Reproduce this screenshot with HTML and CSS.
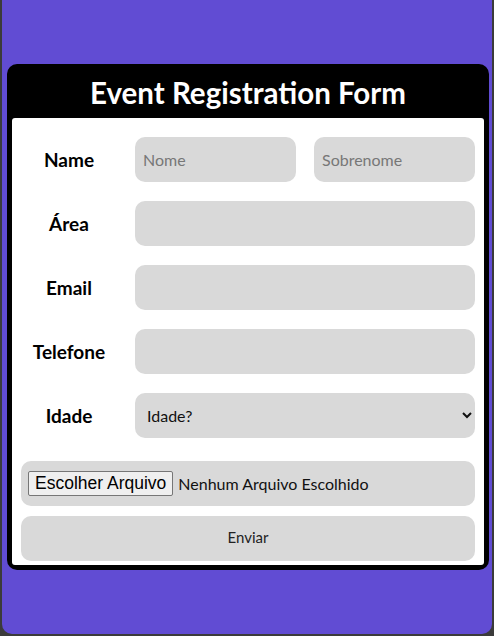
FILE: index.html
```html
<!DOCTYPE html>
<html lang="pt">
<head>
<meta charset="utf-8">
<title>Event Registration Form</title>
<link rel="stylesheet" href="styles.css">
</head>
<body>
<div class="page">
  <div class="card">
    <h1 class="title">Event Registration Form</h1>
    <form class="panel">
      <div class="row">
        <label class="label">Name</label>
        <div class="pair">
          <input class="field" type="text" placeholder="Nome">
          <input class="field" type="text" placeholder="Sobrenome">
        </div>
      </div>
      <div class="row">
        <label class="label">Área</label>
        <input class="field" type="text">
      </div>
      <div class="row">
        <label class="label">Email</label>
        <input class="field" type="text">
      </div>
      <div class="row">
        <label class="label">Telefone</label>
        <input class="field" type="text">
      </div>
      <div class="row">
        <label class="label">Idade</label>
        <select class="field select">
          <option>Idade?</option>
        </select>
      </div>
      <div class="file-row">
        <span class="file-btn">Escolher Arquivo</span>
        <span class="file-name">Nenhum Arquivo Escolhido</span>
      </div>
      <button class="submit" type="button">Enviar</button>
    </form>
  </div>
</div>
</body>
</html>
```
FILE: styles.css
```css
* { box-sizing: border-box; }
html, body { margin: 0; padding: 0; }
body {
  background: #3b3b3b;
  font-family: Lato, "Open Sans", sans-serif;
}
.page {
  margin: 0 2px;
  min-height: 634px;
  background: #614cd3;
  border-radius: 0 0 10px 10px;
  padding: 64px 3px 0 5px;
}
.card {
  background: #000;
  border-radius: 10px;
  padding: 0 5px 5px;
}
.title {
  margin: 0;
  height: 54px;
  line-height: 58px;
  text-align: center;
  color: #fff;
  font-size: 29.5px;
  font-weight: 700;
}
.panel {
  background: #fff;
  border-radius: 3px;
  padding: 19px 9px 4px;
  display: flex;
  flex-direction: column;
}
.row {
  display: flex;
  align-items: center;
  gap: 18px;
  margin-bottom: 19px;
}
.label {
  width: 96px;
  flex: none;
  text-align: center;
  font-weight: 700;
  font-size: 19px;
  color: #000;
}
.pair {
  flex: 1 1 0;
  min-width: 0;
  display: flex;
  gap: 18px;
}
.field {
  flex: 1 1 0;
  width: 0;
  min-width: 0;
  height: 45px;
  border: none;
  border-radius: 10px;
  background: #d9d9d9;
  padding: 0 8px;
  font-family: Lato, sans-serif;
  font-size: 16px;
  color: #222;
  outline: none;
}
.field::placeholder { color: #777; }
.select {
  font-size: 16px;
  padding-left: 8px;
  color: #111;
}
.file-row {
  margin-top: 4px;
  height: 45px;
  background: #d9d9d9;
  border-radius: 10px;
  display: flex;
  align-items: center;
  padding: 0 7px;
  gap: 5px;
}
.file-btn {
  font-family: "Liberation Sans", Arial, sans-serif;
  font-size: 17.5px;
  background: #efefef;
  border: 1px solid #767676;
  border-radius: 2px;
  padding: 0 6px;
  height: 25px;
  line-height: 23px;
  color: #000;
}
.file-name {
  font-size: 16px;
  color: #111;
}
.submit {
  margin-top: 10px;
  height: 45px;
  border: none;
  border-radius: 10px;
  background: #d9d9d9;
  font-family: Lato, sans-serif;
  font-size: 15px;
  line-height: 41px;
  padding-bottom: 4px;
  color: #222;
}
```
